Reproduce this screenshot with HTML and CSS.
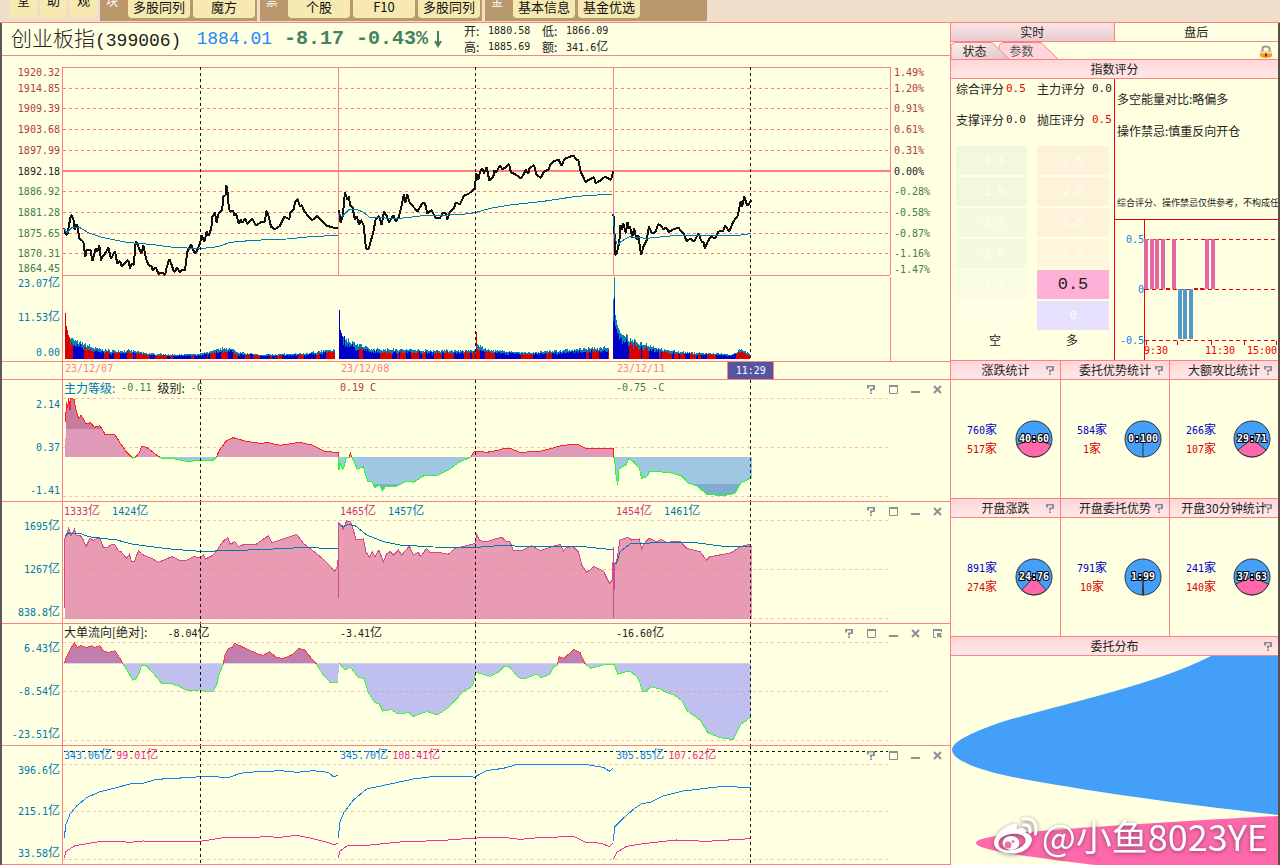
FILE: index.html
```html
<!DOCTYPE html>
<html lang="zh-CN">
<head>
<meta charset="utf-8">
<title>创业板指(399006)</title>
<link rel="stylesheet" href="styles.css">
</head>
<body>
<svg class="defs" aria-hidden="true">
  <symbol id="i-help" viewBox="0 0 9 9"><path d="M0 0h8v5H5v1.500H3V3.500h3V1.500H2V3.500H0zM3 7.500h2V9H3z" fill="currentColor"/></symbol>
  <symbol id="i-max" viewBox="0 0 9 9"><path d="M.5 .5h8v8h-8z" fill="none" stroke="currentColor"/><path d="M0 0h9v2H0z" fill="currentColor"/></symbol>
  <symbol id="i-min" viewBox="0 0 9 9"><path d="M0 6h9v2H0z" fill="currentColor"/></symbol>
  <symbol id="i-close" viewBox="0 0 9 9"><path d="M1 1l7 7M8 1L1 8" stroke="currentColor" stroke-width="2"/></symbol>
  <symbol id="i-pop" viewBox="0 0 9 9"><path d="M3 8.500H.5V1H8.500V3" fill="none" stroke="currentColor"/><path d="M0 0h9v2H0zM4 4h5L7.500 5.500 9 7.500 7.500 9 5.700 7.200 4 9z" fill="currentColor"/></symbol>
</svg>
<div class="app">
  <nav class="topbar">
    <button class="tb tall">堂</button><button class="tb tall">助</button><button class="tb tall">观</button>
    <div class="grp"><span class="cap">块</span><button class="tb">多股同列</button><button class="tb">魔方</button></div>
    <div class="grp"><span class="cap">票</span><button class="tb">个股</button><button class="tb">F10</button><button class="tb">多股同列</button></div>
    <div class="grp last"><span class="cap">金</span><button class="tb">基本信息</button><button class="tb">基金优选</button></div>
  </nav>
  <main class="work">
    <section class="left">
      <header class="quote">
        <h1>创业板指<span class="code">(399006)</span></h1>
        <span class="price">1884.01</span>
        <span class="chg">-8.17</span>
        <span class="chg">-0.43%<svg class="arrow" viewBox="0 0 8 18"><path d="M4 1v15M1 11l3 5 3-5" fill="none" stroke="currentColor" stroke-width="2"/></svg></span>
        <div class="ohlc">
          <span>开:</span><i class="n">1880.58</i><span>低:</span><i class="n">1866.09</i>
          <span>高:</span><i class="n">1885.69</i><span>额:</span><span><i class="n">341.6</i>亿</span>
        </div>
      </header>

      <div class="row main">
        <svg class="axis" viewBox="2 56 60 305">
          <g class="up"><text x="60" y="76">1920.32</text><text x="60" y="92">1914.85</text><text x="60" y="112">1909.39</text><text x="60" y="133">1903.68</text><text x="60" y="154">1897.99</text></g>
          <text class="blk" x="60" y="175">1892.18</text>
          <g class="dn"><text x="60" y="195">1886.92</text><text x="60" y="216">1881.28</text><text x="60" y="237">1875.65</text><text x="60" y="257">1870.31</text><text x="60" y="272">1864.45</text></g>
          <g><text x="60" y="287">23.07<tspan class="cj">亿</tspan></text><text x="60" y="321">11.53<tspan class="cj">亿</tspan></text><text x="60" y="356">0.00</text></g>
        </svg>
        <div class="plot">
          <svg class="canvas" viewBox="186 -12 2487 915" preserveAspectRatio="none">
            <path class="grid" d="M189 85H2671M189 145H2671M189 208H2671M189 271H2671M189 394H2671M189 457H2671M189 520H2671M189 580H2671"/>
            <path class="frame" d="M186 22.500H2670M187.500 22V903M186 646.500H2670M1015.500 22V646M1840.500 22V646M2671.500 22V646M2671.500 652V903"/>
            <path class="mid" d="M189 332H2670"/>
            <path class="v-teal" id="volTeal"/><path class="v-red" id="volRed"/><path class="v-blue" id="volBlue"/>
            <g class="k">
              <polyline points="193,505 197,525 203,520 208,490 213,465 220,475 224,510 228,495 232,495 238,535 250,545 256,590 260,570 272,570 277,603 281,590 287,565 292,575 298,555 303,603 307,590 313,585 325,562 333,597 345,573 352,612 360,603 365,618 375,608 385,600 390,625 395,612 402,615 405,560 408,543 415,560 424,582 430,557 438,595 445,615 455,620 458,630 468,622 475,642 487,637 495,645 500,622 508,597 516,617 520,630 525,636 530,622 540,637 547,630 555,630 562,575 573,553 580,570 585,582 592,570 600,550 605,525 613,545 620,515 626,528 634,505 637,470 645,458 650,487 655,462 667,450 669,410 677,405 679,375 684,405 686,440 690,455 700,452 703,468 708,460 716,492 722,480 728,488 735,475 742,492 757,477 768,497 785,485 795,485 799,452 805,465 813,500 825,508 840,497 853,470 868,478 872,455 882,448 885,425 893,417 900,440 905,435 912,452 925,470 937,480 952,468 965,482 980,497 1000,503 1015,504"/>
              <polyline points="1017,450 1022,488 1028,470 1035,397 1042,418 1047,408 1050,435 1057,440 1065,480 1070,468 1077,495 1082,480 1092,497 1095,545 1100,568 1107,565 1112,545 1120,515 1127,478 1137,468 1145,495 1152,455 1160,468 1168,487 1180,465 1188,485 1197,470 1205,435 1212,403 1216,430 1221,402 1230,430 1240,440 1252,455 1267,430 1275,430 1282,460 1295,450 1307,475 1320,475 1327,460 1337,460 1342,478 1350,455 1362,445 1367,428 1380,433 1392,407 1405,402 1425,385 1428,340 1435,358 1440,335 1447,325 1452,340 1460,322 1468,362 1480,350 1483,330 1489,338 1495,325 1500,315 1507,328 1517,322 1527,312 1533,338 1545,342 1562,355 1570,345 1577,330 1585,340 1588,325 1602,315 1610,345 1623,353 1632,335 1647,328 1650,315 1660,305 1675,298 1685,317 1693,297 1710,290 1720,286 1730,300 1735,300 1742,335 1753,358 1757,368 1765,360 1782,352 1787,370 1800,362 1815,350 1833,360 1840,333"/>
              <polyline points="1840,462 1843,500 1845,585 1850,582 1858,545 1861,495 1866,510 1870,490 1874,505 1878,520 1882,485 1886,505 1890,500 1897,532 1902,505 1910,540 1915,525 1920,565 1924,583 1930,560 1940,540 1947,500 1955,518 1965,518 1975,492 1985,500 1990,508 1998,502 2007,516 2020,508 2035,503 2050,520 2060,543 2072,535 2082,545 2095,520 2105,545 2110,545 2115,565 2123,545 2132,530 2145,535 2155,515 2170,512 2175,497 2188,515 2200,485 2213,467 2222,425 2226,440 2233,410 2242,438 2255,420"/>
            </g>
            <g class="ma">
              <polyline points="193,505 200,518 215,503 240,503 265,518 310,533 380,547 460,554 520,562 600,566 655,560 690,547 760,541 860,537 930,530 1015,526"/>
              <polyline points="1015,455 1025,470 1045,450 1065,447 1090,456 1110,473 1200,475 1270,467 1380,464 1425,458 1470,445 1530,435 1630,424 1730,409 1838,402"/>
              <polyline points="1840,462 1844,530 1852,555 1862,545 1888,530 1940,535 2010,528 2110,527 2200,528 2252,521"/>
            </g>
            <path class="cross" d="M601.500 22V903M1426.500 22V903M2251.500 22V903"/>
          </svg>
        </div>
        <svg class="axis r" viewBox="891 56 59 305">
          <g class="up"><text x="894" y="76">1.49%</text><text x="894" y="92">1.20%</text><text x="894" y="112">0.91%</text><text x="894" y="133">0.61%</text><text x="894" y="154">0.31%</text></g>
          <text class="blk" x="894" y="175">0.00%</text>
          <g class="dn"><text x="894" y="195">-0.28%</text><text x="894" y="216">-0.58%</text><text x="894" y="237">-0.87%</text><text x="894" y="257">-1.16%</text><text x="894" y="273">-1.47%</text></g>
        </svg>
      </div>

      <div class="dates">
        <div class="days n"><span>23/12/07</span><span>23/12/08</span><span>23/12/11</span></div>
        <span class="clock n">11:29</span>
      </div>

      <div class="row sub">
        <svg class="axis" viewBox="2 380 60 121"><text x="60" y="408">2.14</text><text x="60" y="451">0.37</text><text x="60" y="494">-1.41</text></svg>
        <div class="plot">
          <svg class="canvas" viewBox="186 15 2487 363" preserveAspectRatio="none">
            <defs>
              <linearGradient id="lvFill" gradientUnits="userSpaceOnUse" x1="0" y1="0" x2="0" y2="400"><stop offset=".405" stop-color="#c97b9f"/><stop offset=".405" stop-color="#df99b9"/><stop offset=".615" stop-color="#df99b9"/><stop offset=".615" stop-color="#9fc6e2"/><stop offset=".8175" stop-color="#9fc6e2"/><stop offset=".8175" stop-color="#7fadcf"/></linearGradient>
              <linearGradient id="lvLine" gradientUnits="userSpaceOnUse" x1="0" y1="0" x2="0" y2="400"><stop offset=".615" stop-color="#ff2020"/><stop offset=".615" stop-color="#20ff20"/></linearGradient>
            </defs>
            <path class="grid soft" d="M189 70H2667M189 217H2667M189 364H2667"/>
            <path class="frame" d="M187.500 15V378"/>
            <path fill="url(#lvFill)" d="M196 246L197 140 200 80 203 100 206 70 210 105 212 70 222 73 228 105 236 130 243 122 250 130 258 147 272 143 283 157 300 152 315 178 345 180 360 203 380 232 398 250 407 246 418 233 425 214 440 217 475 244 485 250 520 251 560 259 600 257 638 258 650 246 657 228 675 203 683 195 700 188 735 198 780 205 805 203 840 211 900 202 935 210 975 230 1015 232 1016 246 1017 285 1020 265 1028 283 1033 275 1038 250 1047 248 1051 235 1057 250 1072 283 1090 275 1103 320 1115 320 1125 338 1138 330 1147 348 1157 333 1190 333 1220 318 1240 322 1275 300 1315 300 1345 285 1380 260 1412 247 1420 233 1425 228 1460 232 1495 226 1510 220 1530 220 1560 232 1620 229 1655 220 1680 213 1710 209 1735 209 1760 222 1840 220 1841 246 1843 246 1848 300 1853 330 1857 282 1880 268 1885 250 1900 260 1918 280 1925 310 1940 305 1950 288 2010 293 2045 303 2065 325 2090 332 2120 358 2170 362 2205 355 2222 325 2255 307V246Z"/>
            <path class="line" stroke="url(#lvLine)" d="M196 142L200 80 203 100 206 70 210 105 212 70 222 73 228 105 236 130 243 122 250 130 258 147 272 143 283 157 300 152 315 178 345 180 360 203 380 232 398 250 407 246 418 233 425 214 440 217 475 244 485 250 520 251 560 259 600 257 638 258 650 246 657 228 675 203 683 195 700 188 735 198 780 205 805 203 840 211 900 202 935 210 975 230 1015 232 1016 246 1017 285 1020 265 1028 283 1033 275 1038 250 1047 248 1051 235 1057 250 1072 283 1090 275 1103 320 1115 320 1125 338 1138 330 1147 348 1157 333 1190 333 1220 318 1240 322 1275 300 1315 300 1345 285 1380 260 1412 247 1420 233 1425 228 1460 232 1495 226 1510 220 1530 220 1560 232 1620 229 1655 220 1680 213 1710 209 1735 209 1760 222 1840 220 1841 246 1843 246 1848 300 1853 330 1857 282 1880 268 1885 250 1900 260 1918 280 1925 310 1940 305 1950 288 2010 293 2045 303 2065 325 2090 332 2120 358 2170 362 2205 355 2222 325 2255 307"/>
            <path class="cross" d="M601.500 15V378M1426.500 15V378M2251.500 15V378"/>
          </svg>
          <div class="readout"><span class="legend"><b class="teal">主力等级:</b><b class="n dn">-0.11</b><b>级别:</b><b class="n dn">-C</b></span><span class="n up">0.19 C</span><span class="n dn">-0.75 -C</span></div>
        </div>
        <div class="tools"><button aria-label="帮助"><svg><use href="#i-help"/></svg></button><button aria-label="最大化"><svg><use href="#i-max"/></svg></button><button aria-label="最小化"><svg><use href="#i-min"/></svg></button><button aria-label="关闭"><svg><use href="#i-close"/></svg></button></div>
      </div>

      <div class="row sub">
        <svg class="axis" viewBox="2 502 60 121"><text x="60" y="530">1695<tspan class="cj">亿</tspan></text><text x="60" y="573">1267<tspan class="cj">亿</tspan></text><text x="60" y="616">838.8<tspan class="cj">亿</tspan></text></svg>
        <div class="plot">
          <svg class="canvas" viewBox="186 381 2487 363" preserveAspectRatio="none">
            <path class="frame" d="M187.500 381V744"/>
            <path fill="#ea9bb4" d="M194 731V698L195 490 206 460 213 482 223 462 228 480 240 480 250 495 258 515 270 490 280 497 290 490 300 490 310 517 322 518 335 508 345 510 355 527 363 530 380 550 388 538 395 560 403 560 415 528 430 540 455 550 475 562 515 545 545 558 560 556 580 545 600 548 610 540 617 552 640 540 655 520 668 500 683 487 690 508 705 500 715 515 735 507 765 510 805 482 815 503 850 492 890 478 912 507 940 528 955 540 970 553 990 572 1003 590 1013 573 1015 540 1016 668 1017 445 1030 462 1040 438 1052 440 1060 465 1068 495 1090 492 1098 530 1108 548 1117 530 1125 545 1137 525 1150 560 1160 537 1170 530 1180 540 1195 525 1205 540 1228 513 1240 540 1255 532 1262 545 1280 520 1290 532 1320 533 1345 538 1365 520 1400 512 1425 505 1430 477 1440 497 1460 500 1485 492 1505 487 1518 498 1530 500 1540 528 1570 525 1595 512 1620 527 1650 517 1680 508 1690 528 1700 517 1720 515 1735 530 1745 570 1760 592 1782 575 1810 588 1828 625 1838 615 1840 515 1841 728 1843 570 1850 560 1860 495 1885 487 1895 495 1918 492 1925 520 1935 503 1947 490 1970 500 1983 493 2000 502 2040 498 2060 520 2100 530 2120 555 2130 545 2170 538 2195 533 2220 515 2250 508 2255 517V731Z"/>
            <path class="grid soft" d="M189 436H2667M189 583H2667M189 730H2667"/>
            <path class="line" stroke="#d04a90" d="M194 698L195 490 206 460 213 482 223 462 228 480 240 480 250 495 258 515 270 490 280 497 290 490 300 490 310 517 322 518 335 508 345 510 355 527 363 530 380 550 388 538 395 560 403 560 415 528 430 540 455 550 475 562 515 545 545 558 560 556 580 545 600 548 610 540 617 552 640 540 655 520 668 500 683 487 690 508 705 500 715 515 735 507 765 510 805 482 815 503 850 492 890 478 912 507 940 528 955 540 970 553 990 572 1003 590 1013 573 1015 540 1016 668 1017 445 1030 462 1040 438 1052 440 1060 465 1068 495 1090 492 1098 530 1108 548 1117 530 1125 545 1137 525 1150 560 1160 537 1170 530 1180 540 1195 525 1205 540 1228 513 1240 540 1255 532 1262 545 1280 520 1290 532 1320 533 1345 538 1365 520 1400 512 1425 505 1430 477 1440 497 1460 500 1485 492 1505 487 1518 498 1530 500 1540 528 1570 525 1595 512 1620 527 1650 517 1680 508 1690 528 1700 517 1720 515 1735 530 1745 570 1760 592 1782 575 1810 588 1828 625 1838 615 1840 515 1841 728 1843 570 1850 560 1860 495 1885 487 1895 495 1918 492 1925 520 1935 503 1947 490 1970 500 1983 493 2000 502 2040 498 2060 520 2100 530 2120 555 2130 545 2170 538 2195 533 2220 515 2250 508 2255 517"/>
            <g class="ma">
              <polyline points="195,485 205,474 240,475 265,485 350,495 400,508 500,521 600,529 690,527 800,523 920,517 1014,522"/>
              <polyline points="1017,445 1030,455 1045,448 1065,452 1100,480 1150,500 1200,510 1300,516 1430,517 1510,511 1560,514 1740,514 1838,524"/>
              <polyline points="1842,565 1850,565 1860,530 1890,507 1970,503 2080,502 2170,514 2253,514"/>
            </g>
            <path class="cross" d="M601.500 381V744M1426.500 381V744M2251.500 381V744"/>
          </svg>
          <div class="readout"><span><b class="mag"><i class="n">1333</i>亿</b><b class="teal gap"><i class="n">1424</i>亿</b></span><span><b class="mag"><i class="n">1465</i>亿</b><b class="teal gap"><i class="n">1457</i>亿</b></span><span><b class="mag"><i class="n">1454</i>亿</b><b class="teal gap"><i class="n">1461</i>亿</b></span></div>
        </div>
        <div class="tools"><button aria-label="帮助"><svg><use href="#i-help"/></svg></button><button aria-label="最大化"><svg><use href="#i-max"/></svg></button><button aria-label="最小化"><svg><use href="#i-min"/></svg></button><button aria-label="关闭"><svg><use href="#i-close"/></svg></button></div>
      </div>

      <div class="row sub">
        <svg class="axis" viewBox="2 624 60 121"><text x="60" y="652">6.43<tspan class="cj">亿</tspan></text><text x="60" y="695">-8.54<tspan class="cj">亿</tspan></text><text x="60" y="738">-23.51<tspan class="cj">亿</tspan></text></svg>
        <div class="plot">
          <svg class="canvas" viewBox="186 27 2487 363" preserveAspectRatio="none">
            <defs>
              <linearGradient id="flFill" gradientUnits="userSpaceOnUse" x1="0" y1="0" x2="0" y2="400"><stop offset=".365" stop-color="#c17fb0"/><stop offset=".365" stop-color="#c0c0f0"/></linearGradient>
              <linearGradient id="flLine" gradientUnits="userSpaceOnUse" x1="0" y1="0" x2="0" y2="400"><stop offset=".365" stop-color="#ff3838"/><stop offset=".365" stop-color="#38f838"/></linearGradient>
            </defs>
            <path class="frame" d="M187.500 27V390"/>
            <path fill="url(#flFill)" d="M193 146L200 125 212 100 223 84 232 98 243 92 260 98 275 92 285 97 300 92 308 107 325 112 345 107 360 130 370 148 385 172 398 196 407 192 418 175 425 150 437 150 460 175 485 205 515 207 540 215 560 226 600 225 625 231 640 228 650 210 658 175 670 148 675 120 685 100 698 97 703 84 715 90 740 102 775 117 790 121 808 110 830 128 850 130 875 120 897 100 915 105 930 125 950 148 970 180 990 202 1015 203 1016 146 1035 165 1052 157 1075 188 1092 190 1105 233 1125 263 1138 267 1148 288 1175 284 1192 297 1228 293 1238 305 1280 290 1312 300 1345 278 1390 230 1415 215 1418 210 1428 172 1470 184 1495 172 1513 154 1530 157 1555 188 1573 192 1610 177 1623 188 1650 178 1660 155 1672 152 1677 125 1692 130 1722 103 1740 112 1755 146 1772 160 1810 150 1842 147 1853 177 1880 170 1890 168 1910 185 1920 205 1927 228 1940 228 1953 215 1980 222 2000 233 2022 240 2045 257 2062 288 2100 315 2123 353 2160 368 2200 374 2222 328 2252 307V146Z"/>
            <path d="M189 145H2252" stroke="#dcd4e4" stroke-width="3"/>
            <path class="grid soft" d="M189 82H2667M189 229H2667M189 376H2667"/>
            <path class="line" stroke="url(#flLine)" d="M193 143L200 125 212 100 223 84 232 98 243 92 260 98 275 92 285 97 300 92 308 107 325 112 345 107 360 130 370 148 385 172 398 196 407 192 418 175 425 150 437 150 460 175 485 205 515 207 540 215 560 226 600 225 625 231 640 228 650 210 658 175 670 148 675 120 685 100 698 97 703 84 715 90 740 102 775 117 790 121 808 110 830 128 850 130 875 120 897 100 915 105 930 125 950 148 970 180 990 202 1015 203M1016 143L1035 165 1052 157 1075 188 1092 190 1105 233 1125 263 1138 267 1148 288 1175 284 1192 297 1228 293 1238 305 1280 290 1312 300 1345 278 1390 230 1415 215 1418 210 1428 172 1470 184 1495 172 1513 154 1530 157 1555 188 1573 192 1610 177 1623 188 1650 178 1660 155 1672 152 1677 125 1692 130 1722 103 1740 112 1755 146 1772 160 1810 150 1842 147 1853 177 1880 170 1890 168 1910 185 1920 205 1927 228 1940 228 1953 215 1980 222 2000 233 2022 240 2045 257 2062 288 2100 315 2123 353 2160 368 2200 374 2222 328 2252 307"/>
            <path class="cross" d="M601.500 27V390M1426.500 27V390M2251.500 27V390"/>
          </svg>
          <div class="readout"><span>大单流向[绝对]:<b class="gap wide"><i class="n">-8.04</i>亿</b></span><span><i class="n">-3.41</i>亿</span><span><i class="n">-16.60</i>亿</span></div>
        </div>
        <div class="tools"><button aria-label="帮助"><svg><use href="#i-help"/></svg></button><button aria-label="最大化"><svg><use href="#i-max"/></svg></button><button aria-label="最小化"><svg><use href="#i-min"/></svg></button><button aria-label="关闭"><svg><use href="#i-close"/></svg></button><button aria-label="弹出"><svg><use href="#i-pop"/></svg></button></div>
      </div>

      <div class="row sub end">
        <svg class="axis" viewBox="2 746 60 118"><text x="60" y="774">396.6<tspan class="cj">亿</tspan></text><text x="60" y="815">215.1<tspan class="cj">亿</tspan></text><text x="60" y="857">33.58<tspan class="cj">亿</tspan></text></svg>
        <div class="plot">
          <svg class="canvas" viewBox="186 393 2487 354" preserveAspectRatio="none">
            <path class="grid soft" d="M189 448H2667M189 589H2667M189 733H2667"/>
            <path class="frame" d="M187.500 393V747"/>
            <path class="line" stroke="#1080f0" d="M193 670L197 630 210 598 230 573 260 548 300 530 350 518 400 504 425 506 470 493 560 488 630 483 683 489 720 475 770 470 800 471 835 466 890 472 940 467 985 472 1000 485 1014 482M1015 668L1020 620 1032 592 1060 555 1100 522 1170 507 1240 492 1310 483 1410 483 1422 487 1460 467 1510 460 1550 449 1630 450 1760 449 1810 457 1828 469 1838 460M1840 678L1844 635 1870 610 1900 583 1925 566 1950 562 1990 543 2050 528 2150 516 2200 514 2222 518 2252 517"/>
            <path class="line" stroke="#f0309a" d="M193 728L197 710 225 692 290 681 345 678 390 682 430 678 480 681 540 679 600 679 640 673 680 666 740 668 800 665 840 667 890 661 930 669 985 683 1000 688 1014 686M1015 728L1020 708 1045 690 1110 690 1200 681 1330 676 1410 670 1500 666 1560 673 1605 669 1720 664 1755 681 1805 685 1828 695 1840 683M1840 733L1850 712 1880 694 1930 686 2030 675 2120 679 2252 671"/>
            <path class="cross" d="M601.500 393V747M1426.500 393V747M2251.500 393V747"/>
            <path class="cross" d="M192 409.500H2664"/>
          </svg>
          <div class="readout low"><span><b class="blue"><i class="n">343.06</i>亿</b><b class="pink gap"><i class="n">99.01</i>亿</b></span><span><b class="blue"><i class="n">345.70</i>亿</b><b class="pink gap"><i class="n">108.41</i>亿</b></span><span><b class="blue"><i class="n">305.85</i>亿</b><b class="pink gap"><i class="n">107.62</i>亿</b></span></div>
        </div>
        <div class="tools"><button aria-label="帮助"><svg><use href="#i-help"/></svg></button><button aria-label="最大化"><svg><use href="#i-max"/></svg></button><button aria-label="最小化"><svg><use href="#i-min"/></svg></button><button aria-label="关闭"><svg><use href="#i-close"/></svg></button></div>
      </div>
    </section>

    <aside class="right">
      <div class="tabs"><button class="on">实时</button><button>盘后</button></div>
      <div class="subtabs">
        <svg class="tabshape" viewBox="0 0 110 17"><defs><linearGradient id="tg" x1="0" y1="0" x2="1" y2="1"><stop offset="0" stop-color="#fff0e8"/><stop offset="1" stop-color="#e0c4c8"/></linearGradient></defs><path d="M48 17V5Q49 .5 53 .5H90L107 17" fill="#ffd6dc" stroke="#ff8080"/><path d="M0 17V4Q1 .5 5 .5H41L58 17" fill="url(#tg)" stroke="#ff8080"/></svg>
        <button>状态</button><button class="off">参数</button>
        <svg class="lock" viewBox="0 0 14 14"><path d="M3.500 7V3.500Q3.500 1.500 7 1.500T10.500 3.500V7" fill="none" stroke="#9a9a96" stroke-width="2"/><path d="M1 6.500h12v5Q7 14.500 1 11.500z" fill="#f0a030"/><path d="M1 6.500h12v2H1z" fill="#ffd890"/><path d="M6 8.500h2v3H6z" fill="#6a3808"/></svg>
      </div>
      <h2 class="bar">指数评分</h2>
      <div class="score">
        <div class="meter">
          <div class="kv"><span>综合评分</span><b class="n red">0.5</b><span>主力评分</span><b class="n">0.0</b></div>
          <div class="kv"><span>支撑评分</span><b class="n">0.0</b><span>抛压评分</span><b class="n red">0.5</b></div>
          <div class="cells n">
            <span class="c1">-2.5</span><span class="w1">2.5</span>
            <span class="c1">-2.0</span><span class="w1">2.0</span>
            <span class="c2">-1.5</span><span class="w1">1.5</span>
            <span class="c2">-1.0</span><span class="w2">1.0</span>
            <span class="c3">-0.5</span><span class="hit">0.5</span>
            <span class="c4">0</span><span class="zero">0</span>
          </div>
          <div class="ends"><span>空</span><span>多</span></div>
        </div>
        <div class="advice">
          <div class="msg"><p>多空能量对比:略偏多</p><p>操作禁忌:慎重反向开仓</p><small>综合评分、操作禁忌仅供参考，不构成任何投资建议</small></div>
          <svg class="hist" viewBox="1115 220 163 140" preserveAspectRatio="none">
            <path d="M1144.500 220V360" stroke="#f00000"/>
            <path d="M1145 239.500H1278M1145 289.500H1278M1145 340.500H1278" stroke="#f00000" stroke-dasharray="4 3"/>
            <path d="M1146.500 341v4M1177.500 341v4M1211.500 341v4M1244.500 341v4M1276.500 341v4" stroke="#f00000"/>
            <path fill="#e468a4" d="M1144 239h4v50h-4zM1150 239h4v50h-4zM1155 239h4v50h-4zM1161 239h4v50h-4zM1172 239h4v50h-4zM1205 239h4v50h-4zM1211 239h4v50h-4z"/>
            <path fill="#5898c8" d="M1178 289h4v50h-4zM1183 289h4v50h-4zM1189 289h4v50h-4z"/>
            <path fill="#f00000" d="M1166 288h4v2h-4zM1194 288h4v2h-4zM1200 288h4v2h-4z"/>
            <g class="yl"><text x="1144" y="243">0.5</text><text x="1144" y="293">0</text><text x="1144" y="344">-0.5</text></g>
            <g class="xl"><text x="1144" y="354">9:30</text><text x="1205" y="354">11:30</text><text x="1247" y="354">15:00</text></g>
          </svg>
        </div>
      </div>
      <div class="stats">
        <article><h3 class="bar">涨跌统计<button class="q" aria-label="帮助"><svg><use href="#i-help"/></svg></button></h3><div class="body"><p><b class="bl"><i class="n">760</i>家</b><b class="rd"><i class="n">517</i>家</b></p><svg class="pie" viewBox="-19 -19 38 38"><circle r="18"/><path d="M0 0L17.100 5.600A18 18 0 0 1 -17.100 5.600Z"/><text y="3">40:60</text></svg></div></article>
        <article><h3 class="bar">委托优势统计<button class="q" aria-label="帮助"><svg><use href="#i-help"/></svg></button></h3><div class="body"><p><b class="bl"><i class="n">584</i>家</b><b class="rd"><i class="n">1</i>家</b></p><svg class="pie" viewBox="-19 -19 38 38"><circle r="18"/><path d="M0 0V18"/><text y="3">0:100</text></svg></div></article>
        <article><h3 class="bar">大额攻比统计<button class="q" aria-label="帮助"><svg><use href="#i-help"/></svg></button></h3><div class="body"><p><b class="bl"><i class="n">266</i>家</b><b class="rd"><i class="n">107</i>家</b></p><svg class="pie" viewBox="-19 -19 38 38"><circle r="18"/><path d="M0 0L14.200 11A18 18 0 0 1 -14.200 11Z"/><text y="3">29:71</text></svg></div></article>
        <article><h3 class="bar">开盘涨跌<button class="q" aria-label="帮助"><svg><use href="#i-help"/></svg></button></h3><div class="body"><p><b class="bl"><i class="n">891</i>家</b><b class="rd"><i class="n">274</i>家</b></p><svg class="pie" viewBox="-19 -19 38 38"><circle r="18"/><path d="M0 0L12.300 13.100A18 18 0 0 1 -12.300 13.100Z"/><text y="3">24:76</text></svg></div></article>
        <article><h3 class="bar">开盘委托优势<button class="q" aria-label="帮助"><svg><use href="#i-help"/></svg></button></h3><div class="body"><p><b class="bl"><i class="n">791</i>家</b><b class="rd"><i class="n">10</i>家</b></p><svg class="pie" viewBox="-19 -19 38 38"><circle r="18"/><path d="M0 0L.6 18H-.6Z"/><text y="3">1:99</text></svg></div></article>
        <article><h3 class="bar">开盘30分钟统计<button class="q" aria-label="帮助"><svg><use href="#i-help"/></svg></button></h3><div class="body"><p><b class="bl"><i class="n">241</i>家</b><b class="rd"><i class="n">140</i>家</b></p><svg class="pie" viewBox="-19 -19 38 38"><circle r="18"/><path d="M0 0L16.500 7.100A18 18 0 0 1 -16.500 7.100Z"/><text y="3">37:63</text></svg></div></article>
      </div>
      <h2 class="bar">委托分布<button class="q" aria-label="帮助"><svg><use href="#i-help"/></svg></button></h2>
      <div class="dist">
        <svg class="waves" viewBox="951 656 327 209" preserveAspectRatio="none">
          <path fill="#449ff9" d="M1278 656H1211C1180 672 1140 684 1112 692S1040 711 1005 721C975 731 952 741 952 750C952 761 985 772 1018 778C1080 790 1180 804 1278 815Z"/>
          <path fill="#ff69ac" d="M1278 816C1200 820 1100 826 1030 832C990 836 976 839 976 843C976 849 1012 855 1095 865H1278Z"/>
        </svg>
        <div class="mark">
          <svg class="weibo" viewBox="0 0 44 37">
            <path fill="#fff" fill-rule="evenodd" d="M19 7C23 5 24 8 22.500 12C28 10 33 11 31.500 16C36 17 39 20 37.500 25C35 33 26 37 17 36.500C7 36 0 32 0 26C0 18 11 9 19 7ZM17 17C9 18 4 22 4.500 27C5 32 11 34 18 33C26 32 32 28 31.500 23C31 18 25 16 17 17Z"/>
            <ellipse cx="17" cy="26" rx="8.500" ry="7" fill="#fff"/><circle cx="14" cy="28" r="3.500" fill="#e878a8"/><circle cx="19" cy="24.500" r="1.500" fill="#e878a8"/>
            <path d="M29 2Q42 0 42 13Q42 15 41.500 17M29.500 8Q36 7.500 36 13V15" fill="none" stroke="#fff" stroke-width="3" stroke-linecap="round"/>
          </svg>
          <span>@小鱼8023YE</span>
        </div>
      </div>
    </aside>
  </main>
</div>
<script src="volume.js"></script>
</body>
</html>
```

FILE: styles.css
```css
* { box-sizing: border-box; }
body {
  margin: 0;
  background: #ffffe1;
  color: #222;
  font: 12px/14px "Noto Sans CJK SC", sans-serif;
}
h1, h2, h3, p { margin: 0; font-weight: 400; }
b { font-weight: 400; }
i { font-style: normal; }
button { margin: 0; padding: 0; border: 0; background: none; font: inherit; color: inherit; }
svg { display: block; }
.defs { position: absolute; width: 0; height: 0; }
.n { font-family: "DejaVu Sans Mono", monospace; font-size: 10px; }

.up { color: #b03a48; fill: #b03a48; }
.dn { color: #3f7a58; fill: #3f7a58; }
.blk { fill: #222; }
.teal { color: #0078b0; }
.mag { color: #d03080; }
.blue { color: #1080f0; }
.pink { color: #f0309a; }
.red { color: #f00000; }

.app { display: flex; flex-direction: column; min-height: 100vh; }

/* toolbar */
.topbar {
  display: flex;
  align-items: flex-end;
  gap: 3px;
  height: 23px;
  padding: 0 0 1px 10px;
  overflow: hidden;
  background: #efdfca;
  border-bottom: 1px solid #ff8080;
}
.tb {
  width: 62px;
  height: 30px;
  padding-top: 8px;
  border-radius: 4px;
  background: #f6eab2;
  color: #111;
  font-size: 13px;
  white-space: nowrap;
}
.tb.tall { width: 27px; height: 40px; margin-bottom: 3px; padding: 4px 0 0; }
.grp {
  display: flex;
  align-items: flex-end;
  gap: 3px;
  padding: 0 2px 3px 6px;
  background: #b9986c;
  height: 40px;
}
.grp.last { width: 222px; }
.cap { width: 19px; height: 24px; color: #fff; }

/* workspace */
.work {
  flex: 1;
  display: grid;
  grid-template-columns: minmax(0, 1fr) 328px;
  border-left: 2px solid #5a5a5e;
  border-right: 2px solid #5a5048;
}
.left { display: flex; flex-direction: column; min-width: 0; }

.quote {
  display: flex;
  align-items: center;
  height: 33px;
  padding-left: 9px;
  border-bottom: 1px solid #ff8080;
  white-space: nowrap;
}
.quote h1 { font-size: 21px; line-height: 28px; font-weight: 300; margin-right: 15px; }
.code, .price { font-family: "Liberation Mono", monospace; font-size: 18px; }
.price { color: #1e86ff; margin-right: 12px; }
.chg { display: flex; align-items: center; font: bold 20px/24px "Liberation Mono", monospace; color: #438064; margin-right: 12px; }
.arrow { width: 8px; height: 18px; margin-left: 6px; }
.ohlc {
  display: grid;
  grid-template-columns: 24px 54px 24px auto;
  align-items: center;
  line-height: 15px;
  margin-left: 10px;
}

.row { position: relative; display: flex; }
.row .axis { flex: none; width: 60px; }
.row .axis.r { width: 59px; }
.axis text { font: 10px "DejaVu Sans Mono", monospace; text-anchor: end; }
.axis.r text { text-anchor: start; }
.axis > text:not(.blk), .axis > g:not([class]) { fill: #0078b0; }
.axis .cj { font: 12px "Noto Sans CJK SC", sans-serif; }
.plot { position: relative; flex: 1; min-width: 0; }
.canvas { width: 100%; height: 100%; shape-rendering: crispEdges; }
.main { height: 305px; }
.sub { flex: 1 0 122px; border-top: 1px solid #ff8080; padding-right: 59px; }
.sub.end { flex-basis: 120px; border-bottom: 1px solid #ff8080; }

.grid { fill: none; stroke: #ff8080; stroke-width: 3; stroke-dasharray: 10 8; }
.grid.soft { stroke: #f08080; stroke-opacity: .5; }
.frame { fill: none; stroke: #ff8080; stroke-width: 3; }
.mid { stroke: #ff8080; stroke-width: 6; }
.cross { fill: none; stroke: #111; stroke-width: 3; stroke-dasharray: 9 9; }
.k polyline { fill: none; stroke: #111; stroke-width: 6; stroke-linejoin: bevel; }
.ma polyline { fill: none; stroke: #0078b0; stroke-width: 3; }
.line { fill: none; stroke-width: 3; }
.v-teal { fill: #0880b4; }
.v-red { fill: #d80000; }
.v-blue { fill: #0000c8; }

.readout {
  position: absolute;
  inset: 1px 0 auto 2px;
  display: grid;
  grid-template-columns: 276fr 276fr 275fr;
  white-space: pre;
}
.readout .gap { margin-left: 12px; }
.readout .gap.wide { margin-left: 20px; }
.readout.low .gap { margin-left: 4px; }
.legend { display: flex; gap: 6px; }
.tools { position: absolute; top: 5px; right: 8px; display: flex; gap: 13px; color: #8b9098; }
.tools button, .q { width: 9px; height: 9px; }
.tools svg, .q svg { width: 9px; height: 9px; }

.dates { position: relative; height: 18px; border-top: 1px solid #ff8080; padding: 0 59px 0 60px; }
.days {
  display: grid;
  grid-template-columns: 276fr 276fr 275fr;
  height: 17px;
  padding-left: 1px;
  border-left: 1px solid #ff8080;
  color: #ff8080;
}
.days span { padding-left: 1px; }
.clock {
  position: absolute;
  top: 0;
  left: 76.500%;
  width: 47px;
  height: 17px;
  line-height: 17px;
  text-align: center;
  background: #5656a0;
  color: #fff;
  border: 1px solid #ff8080;
  border-width: 0 1px;
}

/* side panel */
.right { display: flex; flex-direction: column; border-left: 1px solid #ff8080; min-width: 0; }
.tabs { display: grid; grid-template-columns: 1fr 1fr; height: 19px; border-bottom: 1px solid #ff8080; }
.tabs .on { background: linear-gradient(#fbe6e4, #e6ccd0); border-right: 1px solid #ff8080; }
.subtabs { position: relative; display: flex; height: 18px; border-bottom: 1px solid #ff8080; }
.tabshape { position: absolute; left: 0; top: 0; width: 110px; height: 17px; }
.subtabs button { position: relative; width: 47px; }
.subtabs .off { color: #555; }
.lock { width: 14px; height: 14px; margin: 3px 5px 0 auto; }
.bar {
  position: relative;
  height: 19px;
  font-size: 12px;
  line-height: 18px;
  text-align: center;
  background: linear-gradient(#ffd6d8, #ffe8e8);
  border-bottom: 1px solid #ff8080;
}
.q { position: absolute; right: 5px; top: 5px; color: #8b9098; }
.score { display: grid; grid-template-columns: 164px minmax(0, 1fr); height: 282px; border-bottom: 1px solid #ff8080; }
.meter { padding: 3px 0 0 5px; border-right: 1px solid #f00000; }
.kv { display: grid; grid-template-columns: 50px 31px 55px 1fr; height: 31px; white-space: nowrap; }
.kv .n { font-size: 11px; }
.cells { display: grid; grid-template-columns: 71px 72px; grid-auto-rows: 29px; gap: 2px 10px; margin-top: 2px; }
.cells span { display: grid; place-items: center; color: #fffff4; font-size: 11px; }
.cells .c1 { background: #f3f8dd; }
.cells .c2 { background: #f5fadf; }
.cells .c3 { background: #f9fce1; }
.cells .c4 { background: #fffde3; }
.cells .w1 { background: #fdf2da; }
.cells .w2 { background: #fff6dc; }
.cells .hit { background: #ffb0d8; color: #222; font-family: "Liberation Mono", monospace; font-size: 17px; }
.cells .zero { background: #e8e0ff; }
.ends { display: grid; grid-template-columns: 78px 76px; text-align: center; margin-top: 3px; }
.advice { display: grid; grid-template-rows: 141px 1fr; min-width: 0; }
.msg { display: flex; flex-direction: column; min-width: 0; padding: 13px 0 0 2px; border-bottom: 1px solid #f00000; overflow: hidden; white-space: nowrap; }
.msg p { height: 32px; }
.msg small { font-size: 9px; line-height: 12px; margin: auto 0 10px; }
.hist { width: 100%; height: 140px; }
.hist text { font: 10px "DejaVu Sans Mono", monospace; }
.yl { fill: #1080f0; text-anchor: end; }
.xl { fill: #f00000; }

.stats { display: grid; grid-template-columns: 110fr 109fr 108fr; }
.stats article { border-right: 1px solid #ff8080; border-bottom: 1px solid #ff8080; }
.stats article:nth-child(3n) { border-right: 0; }
.body { display: flex; align-items: center; justify-content: space-between; height: 118px; padding: 0 7px 0 14px; }
.body p { display: grid; width: 34px; line-height: 17px; text-align: center; }
.bl { color: #0000c8; }
.rd { color: #d80000; }
.pie { width: 38px; height: 38px; }
.pie circle { fill: #449ff9; stroke: #333; }
.pie path { fill: #ff69ac; stroke: #333; }
.pie text {
  font: bold 10px "DejaVu Sans Mono", monospace;
  text-anchor: middle;
  fill: #fff;
  stroke: #000;
  stroke-width: 2px;
  paint-order: stroke;
}
.dist { position: relative; flex: 1; min-height: 209px; }
.waves { width: 100%; height: 100%; }
.mark {
  position: absolute;
  right: 10px;
  bottom: 10px;
  display: flex;
  align-items: center;
  gap: 4px;
  color: #fff;
  font-size: 36px;
  line-height: 40px;
  white-space: nowrap;
  filter: drop-shadow(0 1px 2px rgba(60, 40, 50, .6));
}
.weibo { width: 44px; height: 37px; }
```

FILE: volume.js
```js
// Minute volume bars, three units per pixel, drawn upwards from the baseline.
(function () {
  var base = 897, seed = 7;
  function rnd() { seed = (seed * 16807) % 2147483647; return seed / 2147483647; }
  var days = [
    [[65, 46], [66, 33], [68, 24], [71, 19], [75, 17], [85, 14], [95, 10], [110, 8], [130, 8], [150, 5], [180, 4], [200, 5], [215, 8], [225, 11], [240, 6], [260, 4], [300, 5], [318, 7], [334, 9]],
    [[339, 49], [340, 29], [343, 20], [355, 15], [370, 9], [400, 9], [430, 8], [474, 8], [475, 9], [476, 27], [477, 13], [490, 8], [530, 6], [560, 8], [608, 11]],
    [[613, 60], [614, 82], [615, 44], [617, 34], [620, 26], [630, 18], [650, 13], [665, 8], [690, 6], [720, 5], [732, 4], [740, 9], [749, 5]]
  ];
  var out = { teal: "", red: "", blue: "" }, tone = "red", left = 0;
  function bar(kind, x, h) {
    out[kind] += "M" + x * 3 + " " + base + "v" + -Math.round(h) * 3 + "h3v" + Math.round(h) * 3 + "z";
  }
  days.forEach(function (pts, d) {
    for (var x = pts[0][0], i = 0; x <= pts[pts.length - 1][0]; x++) {
      while (i < pts.length - 2 && x >= pts[i + 1][0]) i++;
      var a = pts[i], b = pts[i + 1];
      var h = a[1] + (b[1] - a[1]) * (x - a[0]) / (b[0] - a[0]);
      if (h < 22) h *= 0.9 + rnd() * 0.3;
      if (left-- <= 0) {
        tone = rnd() < (d === 2 ? 0.35 : 0.45) ? "red" : "blue";
        left = Math.floor(rnd() * 6);
      }
      if (x < 72 || x === 476 || x > 735) tone = "red";
      if ((x > 338 && x < 352) || (x > 612 && x < 619)) tone = "blue";
      bar("teal", x, h);
      bar(tone, x, h > 22 && d < 2 ? h : h * (0.6 + rnd() * 0.25));
    }
  });
  document.getElementById("volTeal").setAttribute("d", out.teal);
  document.getElementById("volRed").setAttribute("d", out.red);
  document.getElementById("volBlue").setAttribute("d", out.blue);
})();
```
